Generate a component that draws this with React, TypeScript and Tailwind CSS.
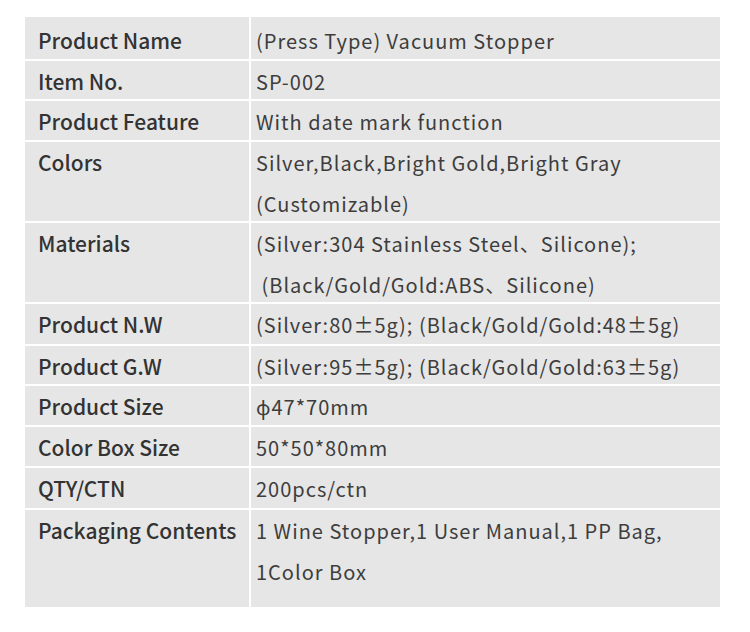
import React from "react";

type Row = { label: string; lines: string[]; h: string; pt?: string };

const rows: Row[] = [
  { label: "Product Name", lines: ["(Press Type) Vacuum Stopper"], h: "h-[42px]", pt: "pt-[3px]" },
  { label: "Item No.", lines: ["SP-002"], h: "h-[38px]" },
  { label: "Product Feature", lines: ["With date mark function"], h: "h-[39px]" },
  { label: "Colors", lines: ["Silver,Black,Bright Gold,Bright Gray", "(Customizable)"], h: "h-[79px]" },
  { label: "Materials", lines: ["(Silver:304 Stainless Steel、Silicone);", "\u00a0(Black/Gold/Gold:ABS、Silicone)"], h: "h-[79px]" },
  { label: "Product N.W", lines: ["(Silver:80±5g); (Black/Gold/Gold:48±5g)"], h: "h-[40px]" },
  { label: "Product G.W", lines: ["(Silver:95±5g); (Black/Gold/Gold:63±5g)"], h: "h-[38px]" },
  { label: "Product Size", lines: ["ϕ47*70mm"], h: "h-[39px]" },
  { label: "Color Box Size", lines: ["50*50*80mm"], h: "h-[39px]" },
  { label: "QTY/CTN", lines: ["200pcs/ctn"], h: "h-[40px]" },
  { label: "Packaging Contents", lines: ["1 Wine Stopper,1 User Manual,1 PP Bag,", "1Color Box"], h: "h-[97px]" },
];

export default function App() {
  return (
    <div className="w-[750px] h-[632px] bg-white pt-[17px] pl-[25px]" style={{ fontFamily: '"Noto Sans CJK SC", "Noto Sans", sans-serif' }}>
      <div className="w-[695px] flex flex-col gap-[2px]">
        {rows.map((r) => (
          <div key={r.label} className={`grid grid-cols-[224px_1fr] grid-rows-[minmax(0,1fr)] gap-[2px] ${r.h}`}>
            <div className={`bg-[#e6e6e6] overflow-hidden pl-[13px] leading-[41px] text-[21px] font-medium text-[#333333] whitespace-nowrap ${r.pt ?? ""}`}>
              {r.label}
            </div>
            <div className={`bg-[#e6e6e6] overflow-hidden pl-[5px] leading-[41px] text-[20px] text-[#3d3d3d] tracking-[1px] whitespace-nowrap ${r.pt ?? ""}`}>
              {r.lines.map((l, i) => (
                <div key={i}>{l}</div>
              ))}
            </div>
          </div>
        ))}
      </div>
    </div>
  );
}
